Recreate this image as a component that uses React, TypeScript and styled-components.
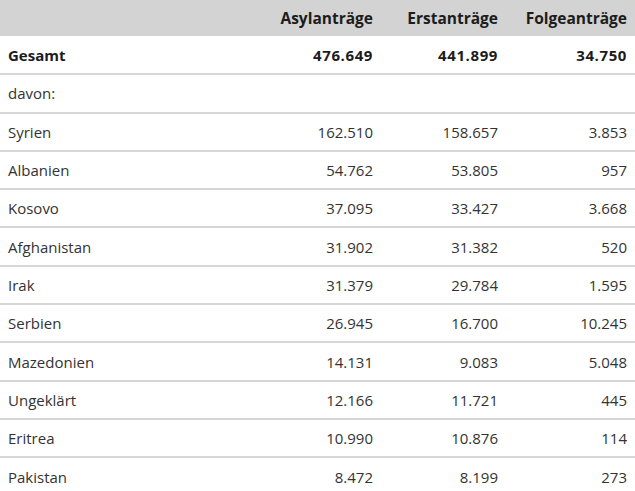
import styled, { createGlobalStyle } from "styled-components";

const GlobalStyle = createGlobalStyle`
  body {
    margin: 0;
    background: #ffffff;
    font-family: "Open Sans", "Liberation Sans", sans-serif;
  }
`;

const rows = [
  ["Syrien", "162.510", "158.657", "3.853"],
  ["Albanien", "54.762", "53.805", "957"],
  ["Kosovo", "37.095", "33.427", "3.668"],
  ["Afghanistan", "31.902", "31.382", "520"],
  ["Irak", "31.379", "29.784", "1.595"],
  ["Serbien", "26.945", "16.700", "10.245"],
  ["Mazedonien", "14.131", "9.083", "5.048"],
  ["Ungeklärt", "12.166", "11.721", "445"],
  ["Eritrea", "10.990", "10.876", "114"],
  ["Pakistan", "8.472", "8.199", "273"],
];

const App = () => {
  return (
    <>
      <GlobalStyle />
      <Table>
        <colgroup>
          <col style={{ width: 250 }} />
          <col style={{ width: 131 }} />
          <col style={{ width: 125 }} />
          <col style={{ width: 129 }} />
        </colgroup>
        <thead>
          <HeadRow>
            <HeadCell />
            <HeadCell>Asylanträge</HeadCell>
            <HeadCell>Erstanträge</HeadCell>
            <HeadCell>Folgeanträge</HeadCell>
          </HeadRow>
        </thead>
        <tbody>
          <Row>
            <Label $bold>Gesamt</Label>
            <Num $bold>476.649</Num>
            <Num $bold>441.899</Num>
            <Num $bold>34.750</Num>
          </Row>
          <Row>
            <Label>davon:</Label>
            <Num />
            <Num />
            <Num />
          </Row>
          {rows.map((r) => (
            <Row key={r[0]}>
              <Label>{r[0]}</Label>
              <Num>{r[1]}</Num>
              <Num>{r[2]}</Num>
              <Num>{r[3]}</Num>
            </Row>
          ))}
        </tbody>
      </Table>
    </>
  );
};

export default App;

const Table = styled.table`
  width: 635px;
  border-collapse: collapse;
  table-layout: fixed;
  font-size: 15px;
  color: #2e2e2e;
`;

const HeadRow = styled.tr`
  background: #d3d3d3;
  height: 36px;
`;

const HeadCell = styled.th`
  text-align: right;
  padding: 0 8px 0 0;
  font-size: 15.5px;
  font-weight: 700;
  color: #1c1c1c;
  white-space: nowrap;
`;

const Row = styled.tr`
  height: 38.3px;
  border-bottom: 2px solid #d6d6d6;
  &:last-child {
    border-bottom: none;
  }
`;

const Label = styled.td<{ $bold?: boolean }>`
  padding: 0 0 0 8px;
  font-weight: ${(p) => (p.$bold ? 700 : 400)};
  color: ${(p) => (p.$bold ? "#1c1c1c" : "#333333")};
`;

const Num = styled.td<{ $bold?: boolean }>`
  text-align: right;
  padding: 0 8px 0 0;
  font-weight: ${(p) => (p.$bold ? 700 : 400)};
  color: ${(p) => (p.$bold ? "#1c1c1c" : "#333333")};
  letter-spacing: ${(p) => (p.$bold ? "0.6px" : "0")};
`;
